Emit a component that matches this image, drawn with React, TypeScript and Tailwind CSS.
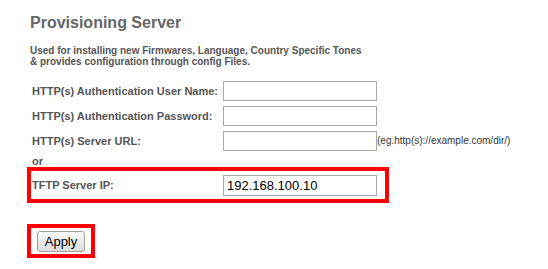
import { useState } from "react";

const labelClass =
  "w-[191px] shrink-0 text-[11px] font-bold leading-[13px] text-[#555]";
const inputClass =
  "h-[20px] w-[154px] shrink-0 border border-[#a9a9a9] bg-white px-[2px] text-[13px] text-black outline-none";

export default function App() {
  const [user, setUser] = useState("");
  const [password, setPassword] = useState("");
  const [url, setUrl] = useState("");
  const [tftp, setTftp] = useState("192.168.100.10");

  return (
    <div className="h-[269px] w-[548px] bg-white pl-[27px] pt-[13px] font-['Liberation_Sans',Arial,sans-serif]">
      <h1 className="pl-[3px] text-[16px] font-bold leading-[19px] text-[#666]">
        Provisioning Server
      </h1>
      <p className="mt-[14px] pl-[3px] text-[10px] font-bold leading-[10.5px] text-[#555]">
        Used for installing new Firmwares, Language, Country Specific Tones
        <br />& provides configuration through config Files.
      </p>

      <form className="mt-[14px]" onSubmit={(event) => event.preventDefault()}>
        <div className="flex flex-col gap-[5px] pl-[5px]">
          <div className="flex items-center">
            <span className={labelClass}>HTTP(s) Authentication User Name:</span>
            <input
              value={user}
              onChange={(event) => setUser(event.target.value)}
              className={inputClass}
            />
          </div>
          <div className="flex items-center">
            <span className={labelClass}>HTTP(s) Authentication Password:</span>
            <input
              type="password"
              value={password}
              onChange={(event) => setPassword(event.target.value)}
              className={inputClass}
            />
          </div>
          <div className="flex items-center">
            <span className={labelClass}>HTTP(s) Server URL:</span>
            <input
              value={url}
              onChange={(event) => setUrl(event.target.value)}
              className={inputClass}
            />
            <span className="text-[10px] leading-[12px] text-[#333]">
              (eg.http(s)://example.com/dir/)
            </span>
          </div>
        </div>

        <div className="mt-[5px] pl-[5px] text-[11px] font-bold leading-[11px] text-[#555]">or</div>

        <div className="mt-[0px] flex h-[36px] w-[362px] items-center border-4 border-[#ff0000] pl-[1px]">
          <span className={labelClass}>TFTP Server IP:</span>
          <input
            value={tftp}
            onChange={(event) => setTftp(event.target.value)}
            className="h-[21px] w-[154px] shrink-0 border border-[#a9a9a9] bg-white px-[3px] text-[13px] text-black outline-none"
          />
        </div>

        <div className="mt-[21px] flex h-[34px] w-[68px] border-4 border-[#ff0000] pl-[6px] pt-[3px]">
          <button
            type="submit"
            className="h-[21px] w-[48px] rounded-[3px] border border-[#a0a0a0] bg-gradient-to-b from-[#fafafa] to-[#dcdcdc] text-[13px] leading-[19px] text-black"
          >
            Apply
          </button>
        </div>
      </form>
    </div>
  );
}
